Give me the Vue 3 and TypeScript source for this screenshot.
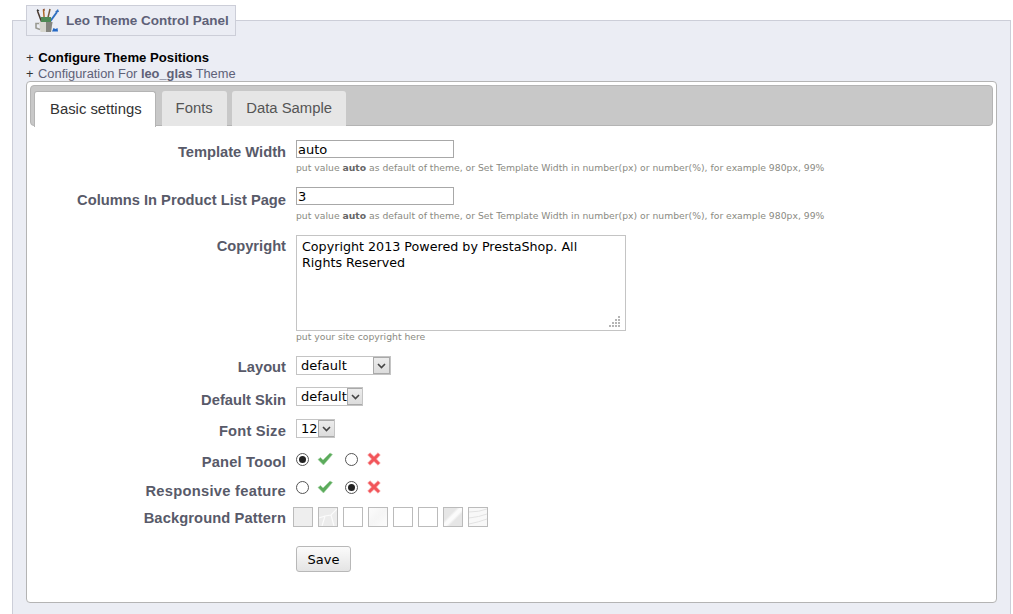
<script setup lang="ts">
const tabs = [
  { name: 'Basic settings', active: true },
  { name: 'Fonts', active: false },
  { name: 'Data Sample', active: false },
]
const hint = 'as default of theme, or Set Template Width in number(px) or number(%), for example 980px, 99%'
const patterns = ['p1', 'p2', 'p3', 'p4', 'p3', 'p3', 'p7', 'p8']
const dots = [
  [10, 1], [7, 4], [10, 4], [4, 7], [7, 7], [10, 7], [1, 10], [4, 10], [7, 10], [10, 10],
]
</script>

<template>
  <fieldset class="panel">
    <legend class="legend">
      <svg class="mug" width="26" height="26" viewBox="0 0 26 26">
        <path d="M7 15 L2.5 3" stroke="#4a3a30" stroke-width="1.5" />
        <path d="M9.5 14 L8.5 2" stroke="#b06a2c" stroke-width="1.5" />
        <path d="M12 14 L15 1" stroke="#7a5a3c" stroke-width="1.5" />
        <path d="M14 15 L22 4" stroke="#2f6fc0" stroke-width="2" />
        <path d="M1.5 3 l1 -2 l2 2 z" fill="#333" />
        <path d="M7.5 1.5 l2 -1 l0.5 2.5 z" fill="#8a4a2a" />
        <path d="M20 4 l3 -3 l1 3 z" fill="#2f6fc0" />
        <path d="M6 9 h10 v6 h-10 z" fill="#4f8a55" />
        <path d="M4 14 h13.500 l-1.500 10 h-10.500 z" fill="#d6d6ce" />
        <path d="M11 14 h6.500 l-1.500 10 h-5 z" fill="#85857e" />
        <path d="M4 15.500 h-3 v4.500 l4 1.500" fill="none" stroke="#9a9a92" stroke-width="1.600" />
        <path d="M17 23.500 l1.500 -3.500 l2 1 l2 -1 l0.500 3.500 z" fill="#2468c4" />
      </svg>
      <span>Leo Theme Control Panel</span>
    </legend>

    <div class="line strong"><span class="plus">+</span> Configure Theme Positions</div>
    <div class="line"><span class="plus">+</span> Configuration For <b>leo_glas</b> Theme</div>

    <div class="box">
      <div class="tabbar">
        <div v-for="t in tabs" :key="t.name" class="tab" :class="{ active: t.active }">{{ t.name }}</div>
      </div>

      <form class="form" @submit.prevent>
        <div class="row r1">
          <label>Template Width</label>
          <div class="field">
            <input class="text" type="text" value="auto" />
            <p class="hint">put value <b>auto</b> {{ hint }}</p>
          </div>
        </div>
        <div class="row r2">
          <label>Columns In Product List Page</label>
          <div class="field">
            <input class="text" type="text" value="3" />
            <p class="hint">put value <b>auto</b> {{ hint }}</p>
          </div>
        </div>
        <div class="row r3">
          <label>Copyright</label>
          <div class="field">
            <div class="area">
              <textarea class="ta" spellcheck="false">Copyright 2013 Powered by PrestaShop. All Rights Reserved</textarea>
              <svg class="grip" width="12" height="12" viewBox="0 0 12 12">
                <rect v-for="(d, i) in dots" :key="i" :x="d[0]" :y="d[1]" width="2" height="2" fill="#b5b5b5" />
              </svg>
            </div>
            <p class="hint tight">put your site copyright here</p>
          </div>
        </div>
        <div class="row r4">
          <label>Layout</label>
          <div class="sel w95"><span>default</span><i class="arrow"><svg width="9" height="6" viewBox="0 0 9 6"><path d="M1 1 L4.500 4.500 L8 1" fill="none" stroke="#444" stroke-width="1.600" /></svg></i></div>
        </div>
        <div class="row r5">
          <label>Default Skin</label>
          <div class="sel w67"><span>default</span><i class="arrow"><svg width="9" height="6" viewBox="0 0 9 6"><path d="M1 1 L4.500 4.500 L8 1" fill="none" stroke="#444" stroke-width="1.600" /></svg></i></div>
        </div>
        <div class="row r6">
          <label>Font Size</label>
          <div class="sel w39"><span>12</span><i class="arrow"><svg width="9" height="6" viewBox="0 0 9 6"><path d="M1 1 L4.500 4.500 L8 1" fill="none" stroke="#444" stroke-width="1.600" /></svg></i></div>
        </div>
        <div class="row r7">
          <label>Panel Toool</label>
          <div class="radios">
            <span class="radio on"></span>
            <svg class="ok" width="16" height="14" viewBox="0 0 16 14"><path d="M1 7.500 L3.500 5.500 L6 8 L13 1 L15.500 2.500 L6.500 13 Z" fill="#5cab5c" stroke="#a4d4a4" stroke-width=".6" /></svg>
            <span class="radio off"></span>
            <svg class="no" width="14" height="14" viewBox="0 0 14 14"><path d="M3 .7 L7 4.500 L11 .7 L13.300 3 L9.500 7 L13.300 11 L11 13.300 L7 9.500 L3 13.300 L.7 11 L4.500 7 L.7 3 Z" fill="#f2555a" stroke="#f9b0b2" stroke-width=".6" /></svg>
          </div>
        </div>
        <div class="row r8">
          <label>Responsive feature</label>
          <div class="radios">
            <span class="radio"></span>
            <svg class="ok" width="16" height="14" viewBox="0 0 16 14"><path d="M1 7.500 L3.500 5.500 L6 8 L13 1 L15.500 2.500 L6.500 13 Z" fill="#5cab5c" stroke="#a4d4a4" stroke-width=".6" /></svg>
            <span class="radio on off"></span>
            <svg class="no" width="14" height="14" viewBox="0 0 14 14"><path d="M3 .7 L7 4.500 L11 .7 L13.300 3 L9.500 7 L13.300 11 L11 13.300 L7 9.500 L3 13.300 L.7 11 L4.500 7 L.7 3 Z" fill="#f2555a" stroke="#f9b0b2" stroke-width=".6" /></svg>
          </div>
        </div>
        <div class="row r9">
          <label>Background Pattern</label>
          <div class="swatches">
            <span v-for="(p, i) in patterns" :key="i" class="swatch" :class="p">
              <svg v-if="p === 'p2'" width="18" height="18" viewBox="0 0 18 18"><path d="M0 10 L6 8 L12 7 L18 1 M6 8 L3 18 M12 7 L15 18" fill="none" stroke="#fbfbfb" stroke-width="1.200" /></svg>
              <svg v-if="p === 'p8'" width="18" height="18" viewBox="0 0 18 18"><path d="M0 4 Q10 4 18 1 M0 10 Q10 9 18 6 M0 16 Q10 14 18 11" fill="none" stroke="#e2e2e2" stroke-width="1" /></svg>
            </span>
          </div>
        </div>
        <div class="row r10">
          <label></label>
          <button class="save" type="button">Save</button>
        </div>
      </form>
    </div>
  </fieldset>
</template>

<style scoped>
.panel {
  margin: 5px 2px 0 12px;
  padding: 14px 13px 30px 13px;
  min-inline-size: 0;
  background: #ebedf4;
  border: 1px solid #ccced8;
  font-family: "Liberation Sans", Arial, sans-serif;
  color: #585a69;
}
.legend {
  display: flex;
  align-items: center;
  box-sizing: border-box;
  width: 210px;
  height: 31px;
  margin: 0;
  padding: 0 5px 0 8px;
  background: #ebedf4;
  border: 1px solid #ccced8;
  font-size: 13.5px;
  font-weight: bold;
  color: #5e6178;
}
.mug { margin-right: 5px; flex: none; }
.line {
  font-size: 12.85px;
  line-height: 16px;
  color: #5e6178;
}
.line b { font-weight: bold; }
.strong { font-size: 13.15px; font-weight: bold; color: #000; }
.plus { font-weight: normal; color: #333; margin-right: 1px; }
.box {
  margin-top: -1px;
  height: 522px;
  box-sizing: border-box;
  background: #fff;
  border: 1px solid #b4b4b4;
  border-radius: 4px;
  padding: 3px;
}
.tabbar {
  display: flex;
  gap: 5.500px;
  height: 41px;
  box-sizing: border-box;
  padding: 5px 3px 0;
  background: #c8c8c8;
  border: 1px solid #b4b4b4;
  border-radius: 4px;
}
.tab {
  box-sizing: border-box;
  height: 35px;
  line-height: 34px;
  padding: 0 14px;
  font-size: 14.85px;
  color: #555;
  background: #e6e6e6;
  border-radius: 3px 3px 0 0;
}
.tab.active {
  height: 36px;
  padding: 0 13.500px 0 15px;
  background: #fff;
  color: #333;
  border: 1px solid #b4b4b4;
  border-bottom: none;
  position: relative;
  z-index: 1;
}
.form {
  display: flex;
  flex-direction: column;
  padding-top: 14px;
}
.row {
  display: grid;
  grid-template-columns: 256px 1fr;
  column-gap: 10px;
  align-items: start;
}
.row label {
  height: 18px;
  text-align: right;
  font-size: 14.7px;
  font-weight: bold;
  line-height: 24px;
  color: #585a69;
  white-space: nowrap;
}
.r3 label, .r4 label, .r9 label { line-height: 22px; }
.r2 label, .r5 label, .r8 label { line-height: 26px; }
.r6 label { letter-spacing: .2px; }
.r7 label { letter-spacing: .2px; }
.r8 label { letter-spacing: .28px; }
.r9 label { letter-spacing: .11px; }
.r2 { margin-top: 13px; }
.r2 .hint { margin-top: 5px; }
.r3 { margin-top: 13px; }
.r4 { margin-top: 13px; }
.r5 { margin-top: 12px; }
.r6 { margin-top: 13px; }
.r7 { margin-top: 12px; }
.r8 { margin-top: 10px; }
.r9 { margin-top: 11px; }
.r10 { margin-top: 19px; }
.field { display: flex; flex-direction: column; }
.text {
  box-sizing: border-box;
  width: 158px;
  height: 18px;
  padding: 0 1px;
  border: 1px solid #a8a8a8;
  font-family: "DejaVu Sans", sans-serif;
  font-size: 13px;
  color: #000;
  background: #fff;
  outline: none;
}
.hint {
  margin: 4px 0 0;
  font-family: "DejaVu Sans", sans-serif;
  font-size: 9.25px;
  line-height: 12px;
  color: #8a8a82;
  white-space: nowrap;
}
.hint b { color: #666; }
.hint.tight { margin-top: 0; }
.area { position: relative; width: 330px; height: 96px; }
.ta {
  display: block;
  box-sizing: border-box;
  width: 330px;
  height: 96px;
  padding: 3px 5px;
  border: 1px solid #c4c4c4;
  font-family: "DejaVu Sans", sans-serif;
  font-size: 12.7px;
  line-height: 16px;
  color: #000;
  background: #fff;
  resize: none;
  outline: none;
}
.grip { position: absolute; right: 6px; bottom: 4px; }
.sel {
  display: flex;
  align-items: center;
  justify-content: space-between;
  box-sizing: border-box;
  height: 19px;
  padding-left: 4px;
  border: 1px solid #c4c4c4;
  background: #fff;
  font-family: "DejaVu Sans", sans-serif;
  font-size: 13px;
  color: #000;
  overflow: hidden;
}
.w95 { width: 95px; }
.w67 { width: 67px; }
.w39 { width: 39px; }
.arrow {
  display: flex;
  align-items: center;
  justify-content: center;
  flex: none;
  box-sizing: border-box;
  width: 17px;
  height: 17px;
  background: linear-gradient(#ececec, #dcdcdc);
  border: 1px solid #a9a9a9;
}
.radios {
  display: flex;
  align-items: center;
  height: 18px;
}
.radio {
  box-sizing: border-box;
  width: 13px;
  height: 13px;
  border: 1px solid #555;
  border-radius: 50%;
  background: #fff;
  position: relative;
}
.radio.on::after {
  content: "";
  position: absolute;
  left: 2px;
  top: 2px;
  width: 7px;
  height: 7px;
  border-radius: 50%;
  background: #222;
}
.ok { margin-left: 8px; }
.radio.off { margin-left: 12px; }
.no { margin-left: 9px; }
.swatches {
  display: flex;
  gap: 5px;
  margin-left: -3px;
}
.swatch {
  display: block;
  box-sizing: border-box;
  width: 20px;
  height: 20px;
  border: 1px solid #bbb;
  background: #fff;
}
.swatch svg { display: block; }
.p1 { background: #eeeeee; }
.p2 { background: #ececec; }
.p4 { background: linear-gradient(135deg, #fcfcfc, #f5f5f5 50%, #fcfcfc); }
.p7 { background: linear-gradient(135deg, #e6e6e6 0 35%, #fbfbfb 45% 55%, #e6e6e6 65%); }
.p8 { background: #f8f8f8; }
.save {
  box-sizing: border-box;
  width: 55px;
  height: 26px;
  padding: 0;
  border: 1px solid #b8b8b8;
  border-radius: 3px;
  background: linear-gradient(#fbfbfb, #e4e4e4);
  font-family: "DejaVu Sans", sans-serif;
  font-size: 13px;
  color: #000;
}
</style>

<style>
html, body { margin: 0; overflow: hidden; background: #fff; }
</style>
